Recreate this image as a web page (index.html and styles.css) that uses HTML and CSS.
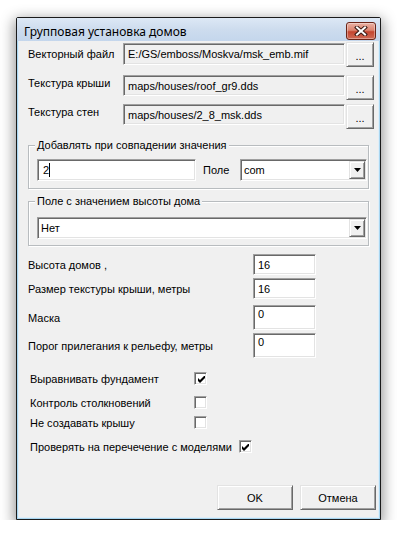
FILE: index.html
```html
<!DOCTYPE html>
<html lang="ru">
<head>
<meta charset="utf-8">
<title>Групповая установка домов</title>
<link rel="stylesheet" href="styles.css">
</head>
<body>
<div class="window">
  <div class="titlebar">
    <span class="title">Групповая установка домов</span>
    <span class="close"><svg width="14" height="10" viewBox="0 0 14 10"><path d="M3 1.5 L11 8.5 M11 1.5 L3 8.5" stroke="#3a1a14" stroke-width="4" stroke-linecap="square" fill="none"/><path d="M3 1.5 L11 8.5 M11 1.5 L3 8.5" stroke="#fff" stroke-width="2" stroke-linecap="square" fill="none"/></svg></span>
  </div>
  <div class="client">
    <div class="filerow r1">
      <span class="lbl">Векторный файл</span>
      <span class="edit ro">E:/GS/emboss/Moskva/msk_emb.mif</span>
      <span class="btn browse">...</span>
    </div>
    <div class="filerow r2">
      <span class="lbl">Текстура крыши</span>
      <span class="edit ro">maps/houses/roof_gr9.dds</span>
      <span class="btn browse">...</span>
    </div>
    <div class="filerow r3">
      <span class="lbl">Текстура стен</span>
      <span class="edit ro">maps/houses/2_8_msk.dds</span>
      <span class="btn browse">...</span>
    </div>

    <div class="group g1">
      <div class="legend">Добавлять при совпадении значения</div>
      <div class="grow g1row">
        <span class="edit val">2<span class="caret"></span></span>
        <span class="pole">Поле</span>
        <span class="combo c1"><span class="ctext">com</span><span class="drop"><svg width="7" height="4" viewBox="0 0 7 4"><polygon points="0,0 7,0 3.5,4" fill="#000"/></svg></span></span>
      </div>
    </div>

    <div class="group g2">
      <div class="legend">Поле с значением высоты дома</div>
      <div class="grow g2row">
        <span class="combo c2"><span class="ctext">Нет</span><span class="drop"><svg width="7" height="4" viewBox="0 0 7 4"><polygon points="0,0 7,0 3.5,4" fill="#000"/></svg></span></span>
      </div>
    </div>

    <div class="numrow n1"><span class="nlbl">Высота домов ,</span><span class="edit num">16</span></div>
    <div class="numrow n2"><span class="nlbl">Размер текстуры крыши, метры</span><span class="edit num">16</span></div>
    <div class="numrow n3"><span class="nlbl">Маска</span><span class="edit num tall">0</span></div>
    <div class="numrow n4"><span class="nlbl">Порог прилегания к рельефу, метры</span><span class="edit num tall">0</span></div>

    <div class="chkrow k1"><span class="klbl">Выравнивать фундамент</span><span class="chk"><svg width="7" height="7" viewBox="0 0 7 7"><polygon points="0,2 2,4 6,0 7,0 7,2 2,7 0,5" fill="#000"/></svg></span></div>
    <div class="chkrow k2"><span class="klbl">Контроль столкновений</span><span class="chk"></span></div>
    <div class="chkrow k3"><span class="klbl">Не создавать крышу</span><span class="chk"></span></div>
    <div class="chkrow k4"><span class="klbl auto">Проверять на перечечение с моделями</span><span class="chk"><svg width="7" height="7" viewBox="0 0 7 7"><polygon points="0,2 2,4 6,0 7,0 7,2 2,7 0,5" fill="#000"/></svg></span></div>

    <div class="buttons">
      <span class="btn push">OK</span>
      <span class="btn push">Отмена</span>
    </div>
  </div>
</div>
</body>
</html>
```
FILE: styles.css
```css
* { box-sizing: border-box; }
html, body { margin: 0; padding: 0; background: #ffffff; }
body {
  font-family: "Liberation Sans", Arial, sans-serif;
  font-size: 11px;
  color: #000;
}
.window {
  margin: 17px 0 0 16px;
  width: 365px;
  height: 503px;
  border: 1px solid #1b1b1b;
  border-radius: 2px 2px 0 0;
  background: #a9d6f0;
  padding: 0 1px 1px 1px;
  box-shadow: 0 4px 14px 2px rgba(0,0,0,0.42);
  display: flex;
  flex-direction: column;
}
.titlebar {
  height: 23px;
  margin: 0 -1px;
  padding: 0 0 0 1px;
  background: linear-gradient(#dde8f5, #cddcee 50%, #c4d6ec);
  display: flex;
  align-items: flex-start;
  justify-content: space-between;
}
.title {
  font-family: "Noto Sans", "Liberation Sans", sans-serif;
  padding: 7px 0 0 6px;
  line-height: 14px;
  font-size: 12px;
}
.close {
  margin: 4px 4px 0 0;
  width: 30px;
  height: 18px;
  border: 1px solid #6b2417;
  border-radius: 3px;
  background: linear-gradient(#eab2a5, #dc8470 45%, #c4452f 55%, #cf6a55);
  box-shadow: inset 0 0 0 1px rgba(255,255,255,0.35);
  display: flex;
  align-items: center;
  justify-content: center;
}
.client {
  flex: 1;
  background: #f0f0f0;
  border: 1px solid #e0eef8;
  border-top: 0;
  display: flex;
  flex-direction: column;
  padding-bottom: 7px;
}

/* sunken edit */
.edit {
  display: flex;
  align-items: center;
  border: 1px solid;
  border-color: #a0a0a0 #ffffff #ffffff #a0a0a0;
  box-shadow: inset 1px 1px 0 #696969, inset -1px -1px 0 #e3e3e3;
  background: #fff;
  white-space: nowrap;
  overflow: hidden;
  line-height: 14px;
}
.btn {
  display: flex;
  align-items: center;
  justify-content: center;
  background: #f0f0f0;
  border: 1px solid;
  border-color: #e3e3e3 #696969 #696969 #e3e3e3;
  box-shadow: inset 1px 1px 0 #ffffff, inset -1px -1px 0 #a0a0a0;
}

/* file rows */
.filerow {
  display: flex;
  align-items: flex-start;
  padding-left: 9px;
}
.filerow .lbl { width: 95px; flex: none; line-height: 16px; }
.filerow .ro {
  width: 222px;
  flex: none;
  background: #f0f0f0;
  padding-left: 4px;
}
.filerow .browse {
  width: 28px;
  height: 25px;
  flex: none;
  margin-left: 1px;
  padding-top: 2px;
}
.r1 { margin-top: 1px; }
.r1 .lbl { margin-top: 4px; }
.r1 .ro { margin-top: 1px; height: 22px; }
.r2 { margin-top: 8px; }
.r2 .ro { height: 21px; }
.r3 { margin-top: 4px; }
.r3 .ro { height: 21px; }

/* groups */
.group {
  margin-left: 9px;
  width: 341px;
  border: 1px solid #b8bcbf;
  box-shadow: inset 1px 1px 0 #fff, 1px 1px 0 #fff;
  padding-left: 8px;
}
.legend {
  margin: -9px 0 0 -2px;
  padding: 0 2px;
  width: fit-content;
  background: #f0f0f0;
  line-height: 16px;
}
.grow { display: flex; align-items: center; }
.g1 { margin-top: 16px; padding-bottom: 7px; }
.g1row { margin-top: 6px; }
.g2 { margin-top: 12px; padding-bottom: 6px; }
.g2row { margin-top: 8px; }
.val { width: 159px; flex: none; height: 22px; padding-left: 5px; }
.caret { display: inline-block; width: 1px; height: 14px; background: #000; margin-left: 0px; }
.pole { width: 37px; flex: none; margin-left: 7px; }
.combo {
  display: flex;
  align-items: stretch;
  flex: none;
  height: 22px;
  border: 1px solid;
  border-color: #a0a0a0 #ffffff #ffffff #a0a0a0;
  box-shadow: inset 1px 1px 0 #696969, inset -1px -1px 0 #e3e3e3;
  background: #fff;
  padding: 1px;
}
.c1 { width: 127px; }
.c2 { width: 330px; }
.ctext { flex: 1; padding-left: 2px; line-height: 18px; }
.drop {
  width: 16px;
  display: flex;
  align-items: center;
  justify-content: center;
  background: #f0f0f0;
  border: 1px solid;
  border-color: #e3e3e3 #696969 #696969 #e3e3e3;
  box-shadow: inset 1px 1px 0 #ffffff, inset -1px -1px 0 #a0a0a0;
}

/* numeric rows */
.numrow { display: flex; align-items: center; padding-left: 9px; }
.nlbl { width: 225px; flex: none; line-height: 14px; }
.num { width: 63px; flex: none; height: 21px; padding-left: 4px; }
.num.tall { height: 25px; align-items: flex-start; padding-top: 1px; }
.n1 { margin-top: 8px; }
.n2 { margin-top: 3px; }
.n3 { margin-top: 6px; }
.n4 { margin-top: 3px; }

/* checkbox rows */
.chkrow { display: flex; align-items: center; padding-left: 11px; height: 13px; }
.klbl { width: 164px; flex: none; line-height: 14px; }
.klbl.auto { width: auto; margin-right: 7px; }
.chk {
  width: 13px;
  height: 13px;
  flex: none;
  border: 1px solid;
  border-color: #a0a0a0 #ffffff #ffffff #a0a0a0;
  box-shadow: inset 1px 1px 0 #696969, inset -1px -1px 0 #e3e3e3;
  background: #fff;
  display: flex;
  align-items: center;
  justify-content: center;
}
.chk svg { display: block; margin: 1px 0 0 1px; }
.k1 { margin-top: 14px; }
.k2 { margin-top: 11px; }
.k3 { margin-top: 7px; }
.k4 { margin-top: 11px; }

/* bottom buttons */
.buttons {
  margin-top: auto;
  display: flex;
  justify-content: flex-end;
  gap: 7px;
  padding-right: 2px;
}
.push { width: 76px; height: 25px; }
```
